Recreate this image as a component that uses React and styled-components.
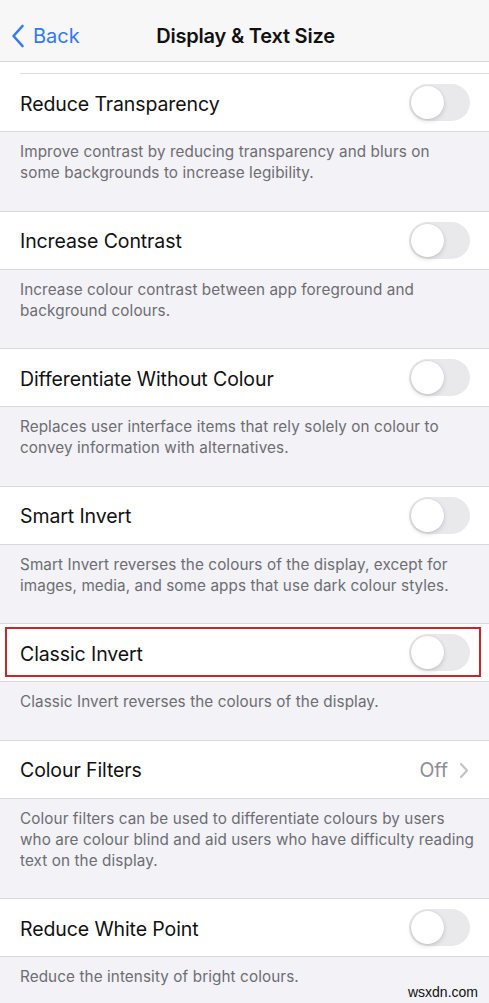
import styled, { createGlobalStyle } from "styled-components";

const GlobalStyle = createGlobalStyle`
  html, body {
    margin: 0;
    padding: 0;
    background: #f2f2f7;
    font-family: Inter, "Liberation Sans", sans-serif;
    -webkit-font-smoothing: antialiased;
  }
`;

// line breaks follow the screenshot
const settings = [
  {
    title: "Reduce Transparency",
    note: "Improve contrast by reducing transparency and blurs on\nsome backgrounds to increase legibility.",
  },
  {
    title: "Increase Contrast",
    note: "Increase colour contrast between app foreground and\nbackground colours.",
  },
  {
    title: "Differentiate Without Colour",
    note: "Replaces user interface items that rely solely on colour to\nconvey information with alternatives.",
  },
  {
    title: "Smart Invert",
    note: "Smart Invert reverses the colours of the display, except for\nimages, media, and some apps that use dark colour styles.",
  },
  {
    title: "Classic Invert",
    note: "Classic Invert reverses the colours of the display.",
    marked: true,
  },
  {
    title: "Colour Filters",
    note: "Colour filters can be used to differentiate colours by users\nwho are colour blind and aid users who have difficulty reading\ntext on the display.",
    value: "Off",
  },
  {
    title: "Reduce White Point",
    note: "Reduce the intensity of bright colours.",
  },
];

function App() {
  return (
    <Page>
      <GlobalStyle />
      <NavBar>
        <BackButton>
          <svg width="14" height="24" viewBox="0 0 14 24">
            <path
              d="M11.5 2 L2.5 12 L11.5 22"
              fill="none"
              stroke="#3478f6"
              strokeWidth="2.6"
              strokeLinecap="round"
              strokeLinejoin="round"
            />
          </svg>
          <span>Back</span>
        </BackButton>
        <NavTitle>Display &amp; Text Size</NavTitle>
      </NavBar>
      <TopStub />
      {settings.map((item) => (
        <div key={item.title}>
          <Cell>
            <CellTitle>{item.title}</CellTitle>
            {item.value ? (
              <Detail>
                <span>{item.value}</span>
                <svg width="10" height="17" viewBox="0 0 10 17">
                  <path
                    d="M2 2 L8 8.5 L2 15"
                    fill="none"
                    stroke="#c4c4c7"
                    strokeWidth="2.2"
                    strokeLinecap="round"
                    strokeLinejoin="round"
                  />
                </svg>
              </Detail>
            ) : (
              <Toggle>
                <Knob />
              </Toggle>
            )}
            {item.marked && <Highlight />}
          </Cell>
          <Footer>{item.note}</Footer>
        </div>
      ))}
      <Watermark>wsxdn.com</Watermark>
    </Page>
  );
}

export default App;

const Page = styled.div`
  position: relative;
  width: 489px;
  height: 1003px;
  overflow: hidden;
  background: #f2f2f7;
`;

const NavBar = styled.div`
  position: relative;
  height: 62px;
  padding-top: 10px;
  display: flex;
  align-items: center;
  justify-content: center;
  background: #f7f7f7;
  border-bottom: 1px solid #d6d6d9;
  box-sizing: border-box;
`;

const BackButton = styled.div`
  position: absolute;
  left: 11px;
  top: 10px;
  bottom: 0;
  display: flex;
  align-items: center;
  gap: 8px;
  color: #3478f6;
  font-size: 20px;

  span {
    margin-top: 1px;
  }
`;

const NavTitle = styled.div`
  font-size: 20px;
  font-weight: 600;
  color: #111;
  margin-left: 2px;
  letter-spacing: -0.2px;
`;

const TopStub = styled.div`
  height: 12px;
  background: #fff;
  border-bottom: 1px solid #dcdce0;
  box-sizing: border-box;
  position: relative;

  &::before {
    content: "";
    position: absolute;
    left: 0;
    width: 20px;
    bottom: -1px;
    height: 1px;
    background: #fff;
  }
`;

const Cell = styled.div`
  position: relative;
  height: 58px;
  display: flex;
  align-items: center;
  justify-content: space-between;
  padding: 0 19px 0 20px;
  background: #fff;
  border-bottom: 1px solid #d9d9dd;
  box-sizing: border-box;
`;

const CellTitle = styled.div`
  font-size: 19.5px;
  color: #111;
  letter-spacing: -0.1px;
  padding-top: 2px;
`;

const Toggle = styled.div`
  width: 61px;
  height: 37px;
  border-radius: 19px;
  background: #e9e9eb;
  padding: 2px;
  box-sizing: border-box;
  display: flex;
  align-items: center;
`;

const Knob = styled.div`
  width: 33px;
  height: 33px;
  border-radius: 50%;
  background: #fff;
  box-shadow: 0 2px 5px rgba(0, 0, 0, 0.15), 0 0 0 0.5px rgba(0, 0, 0, 0.06);
`;

const Detail = styled.div`
  display: flex;
  align-items: center;
  gap: 11px;
  color: #8e8e93;
  font-size: 19.5px;
  margin-right: 1px;
  padding-top: 2px;
`;

const Highlight = styled.div`
  position: absolute;
  top: 3px;
  left: 5px;
  right: 8px;
  bottom: 4px;
  border: 2px solid #c5262d;
  pointer-events: none;
`;

const Footer = styled.div`
  padding: 9px 8px 27.5px 20px;
  font-size: 15.25px;
  line-height: 21px;
  color: #6d6d72;
  background: #f2f2f7;
  border-bottom: 1px solid #d9d9dd;
  letter-spacing: 0.1px;
  white-space: pre-line;
`;

const Watermark = styled.div`
  position: absolute;
  right: 11px;
  bottom: 3px;
  font-family: "Liberation Sans", Arial, sans-serif;
  font-size: 14px;
  color: #111;
`;
